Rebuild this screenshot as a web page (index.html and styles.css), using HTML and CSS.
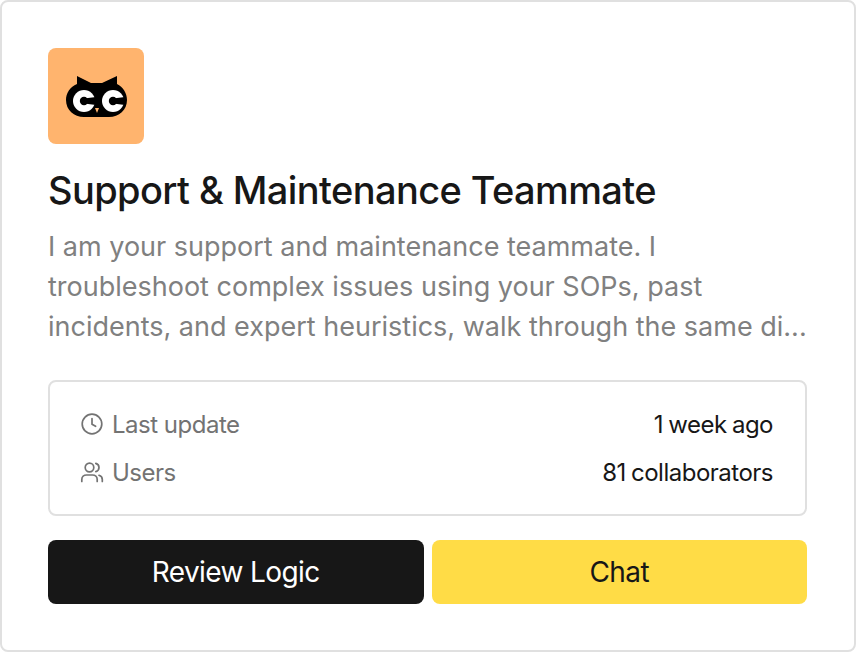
FILE: index.html
```html
<!DOCTYPE html>
<html lang="en">
<head>
  <meta charset="UTF-8" />
  <meta name="viewport" content="width=device-width, initial-scale=1.0">
  <title>Support &amp; Maintenance Teammate</title>
  <link rel="stylesheet" href="styles.css">
</head>
<body>

  <div class="card">
    <!-- Owl logo -->
    <div class="logo">
      <svg width="96" height="96" viewBox="0 0 96 96">
        <path d="M29 28 L43 35 H54 L69 28 V36 C75 39 79 45 79 52 C79 62 71 69 61 69 H36 C26 69 18 62 18 52 C18 45 22 39 29 36 Z" fill="#000"/>
        <circle cx="36" cy="53" r="11" fill="#fff"/>
        <circle cx="36" cy="53" r="4.2" fill="#000"/>
        <path d="M36 50.5 L48 49 V57 L36 55.5 Z" fill="#000"/>
        <circle cx="65" cy="53" r="11" fill="#fff"/>
        <circle cx="65" cy="53" r="4.2" fill="#000"/>
        <path d="M65 50.5 L77 49 V57 L65 55.5 Z" fill="#000"/>
        <path d="M47 60 L51 60 L49 65 Z" fill="#ffb46e"/>
      </svg>
    </div>

    <h1>Support &amp; Maintenance Teammate</h1>
    <p class="desc">I am your support and maintenance teammate. I troubleshoot complex issues using your SOPs, past incidents, and expert heuristics, walk through the same di...</p>

    <div class="info">
      <div class="info-row">
        <span class="info-label">
          <svg width="24" height="24" viewBox="0 0 24 24" fill="none" stroke="#737373" stroke-width="1.7" stroke-linecap="round" stroke-linejoin="round">
            <circle cx="12" cy="12" r="9.8"/>
            <path d="M12 6.5V12.3L15.6 14.3"/>
          </svg>
          Last update
        </span>
        <span class="info-value">1 week ago</span>
      </div>
      <div class="info-row">
        <span class="info-label">
          <svg width="24" height="24" viewBox="0 0 24 24" fill="none" stroke="#737373" stroke-width="1.7" stroke-linecap="round" stroke-linejoin="round">
            <circle cx="9.5" cy="7.5" r="4.3"/>
            <path d="M1.8 21.5V19.5C1.8 16.8 4 15 6.5 15H12.5C15 15 17.2 16.8 17.2 19.5V21.5"/>
            <path d="M15.8 3.4C17.8 4 19 5.6 19 7.5C19 9.4 17.8 11 15.8 11.6"/>
            <path d="M19 15.3C21 15.9 22.3 17.4 22.3 19.5V21.5"/>
          </svg>
          Users
        </span>
        <span class="info-value">81 collaborators</span>
      </div>
    </div>

    <div class="actions">
      <button class="btn btn-dark">Review Logic</button>
      <button class="btn btn-yellow">Chat</button>
    </div>
  </div>

</body>
</html>
```

FILE: styles.css
```css
* {
  box-sizing: border-box;
}

body {
  margin: 0;
  background: #fff;
  font-family: Inter, 'Noto Sans', sans-serif;
  color: #171717;
}

.card {
  width: 856px;
  height: 652px;
  padding: 46px 47px 46px 46px;
  background: #fff;
  border: 2px solid #e0e0e0;
  border-radius: 8px;
}

.logo {
  width: 96px;
  height: 96px;
  background: #ffb46e;
  border-radius: 8px;
}

.logo svg {
  display: block;
}

h1 {
  margin: 22px 0 0;
  font-size: 38px;
  line-height: 48px;
  font-weight: 500;
  letter-spacing: -0.6px;
  white-space: nowrap;
}

.desc {
  margin: 13px 0 0;
  font-size: 27px;
  line-height: 40px;
  color: #808080;
}

.info {
  display: flex;
  flex-direction: column;
  gap: 16px;
  margin-top: 33px;
  padding: 26px 32px 26px 30px;
  border: 2px solid #e0e0e0;
  border-radius: 8px;
}

.info-row {
  display: flex;
  justify-content: space-between;
  align-items: center;
  height: 32px;
  font-size: 24px;
  letter-spacing: -0.5px;
}

.info-label {
  display: flex;
  align-items: center;
  gap: 8px;
  color: #737373;
}

.info-value {
  word-spacing: -1px;
}

.actions {
  display: flex;
  gap: 8px;
  margin-top: 24px;
}

.btn {
  flex: 1;
  height: 64px;
  border: none;
  border-radius: 8px;
  font-family: inherit;
  font-size: 28px;
  letter-spacing: -0.6px;
  cursor: pointer;
}

.btn-dark {
  background: #171717;
  color: #fff;
}

.btn-yellow {
  background: #ffdc46;
  color: #171717;
}
```
